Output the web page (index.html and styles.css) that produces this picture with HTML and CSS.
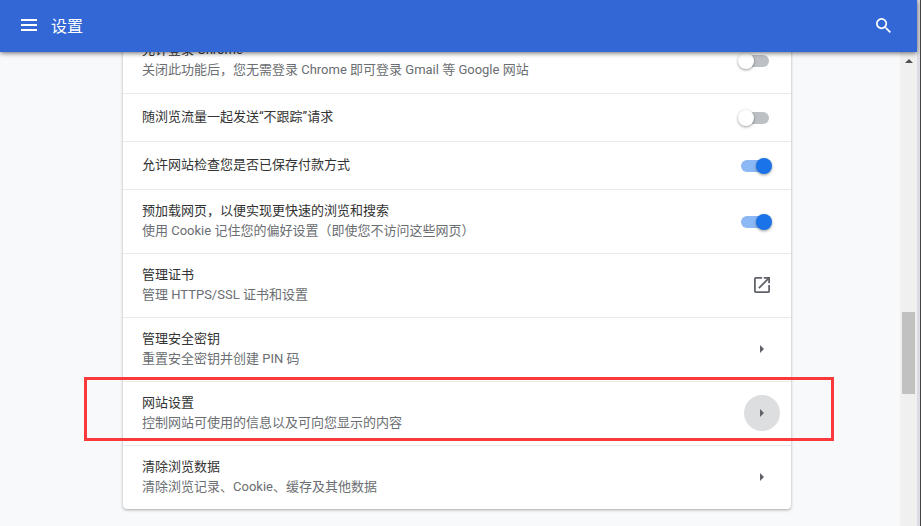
FILE: index.html
```
<!DOCTYPE html>
<html lang="zh-CN">
<head>
    <meta charset="UTF-8">
    <meta name="viewport" content="width=device-width, initial-scale=1.0">
    <title>设置</title>
    <link rel="stylesheet" href="styles.css">
</head>
<body>
    <div class="window">
        <header class="toolbar">
            <button class="toolbar-btn" aria-label="主菜单">
                <svg width="16" height="12" viewBox="0 0 16 12"><path d="M0 0h16v2H0zM0 5h16v2H0zM0 10h16v2H0z" fill="currentColor"/></svg>
            </button>
            <h1>设置</h1>
            <button class="toolbar-btn search-btn" aria-label="搜索设置">
                <svg width="15" height="15" viewBox="3 3 17.5 17.5"><path d="M15.5 14h-.79l-.28-.27A6.47 6.47 0 0 0 16 9.500 6.500 6.500 0 1 0 9.500 16c1.610 0 3.090-.59 4.230-1.570l.27.28v.79l5 4.990L20.490 19l-4.990-5zm-6 0C7.010 14 5 11.990 5 9.500S7.010 5 9.500 5 14 7.010 14 9.500 11.990 14 9.500 14z" fill="currentColor"/></svg>
            </button>
        </header>

        <div class="view">
            <main class="content">
                <div class="card">
                    <div class="row">
                        <label class="text" for="signin">
                            <span class="title">允许登录 Chrome</span>
                            <span class="sub">关闭此功能后，您无需登录 Chrome 即可登录 Gmail 等 Google 网站</span>
                        </label>
                        <input type="checkbox" class="toggle" id="signin">
                    </div>
                    <div class="row">
                        <label class="text" for="dnt"><span class="title">随浏览流量一起发送“不跟踪”请求</span></label>
                        <input type="checkbox" class="toggle" id="dnt">
                    </div>
                    <div class="row">
                        <label class="text" for="payment"><span class="title">允许网站检查您是否已保存付款方式</span></label>
                        <input type="checkbox" class="toggle" id="payment" checked>
                    </div>
                    <div class="row">
                        <label class="text" for="preload">
                            <span class="title">预加载网页，以便实现更快速的浏览和搜索</span>
                            <span class="sub">使用 Cookie 记住您的偏好设置（即使您不访问这些网页）</span>
                        </label>
                        <input type="checkbox" class="toggle" id="preload" checked>
                    </div>
                    <div class="row">
                        <div class="text">
                            <span class="title">管理证书</span>
                            <span class="sub">管理 HTTPS/SSL 证书和设置</span>
                        </div>
                        <button class="icon-btn" aria-label="管理证书">
                            <svg width="16" height="16" viewBox="3 3 18 18"><path d="M19 19H5V5h7V3H5a2 2 0 0 0-2 2v14a2 2 0 0 0 2 2h14c1.100 0 2-.9 2-2v-7h-2v7zM14 3v2h3.590l-9.830 9.830 1.410 1.410L19 6.410V10h2V3h-7z" fill="currentColor"/></svg>
                        </button>
                    </div>
                    <div class="row">
                        <div class="text">
                            <span class="title">管理安全密钥</span>
                            <span class="sub">重置安全密钥并创建 PIN 码</span>
                        </div>
                        <button class="icon-btn" aria-label="管理安全密钥">
                            <svg width="4" height="8" viewBox="0 0 4 8"><path d="M0 0l4 4-4 4z" fill="currentColor"/></svg>
                        </button>
                    </div>
                    <div class="row marked">
                        <div class="text">
                            <span class="title">网站设置</span>
                            <span class="sub">控制网站可使用的信息以及可向您显示的内容</span>
                        </div>
                        <button class="icon-btn active" aria-label="网站设置">
                            <svg width="4" height="8" viewBox="0 0 4 8"><path d="M0 0l4 4-4 4z" fill="currentColor"/></svg>
                        </button>
                    </div>
                    <div class="row">
                        <div class="text">
                            <span class="title">清除浏览数据</span>
                            <span class="sub">清除浏览记录、Cookie、缓存及其他数据</span>
                        </div>
                        <button class="icon-btn" aria-label="清除浏览数据">
                            <svg width="4" height="8" viewBox="0 0 4 8"><path d="M0 0l4 4-4 4z" fill="currentColor"/></svg>
                        </button>
                    </div>
                </div>
            </main>

            <div class="scrollbar" aria-hidden="true">
                <div class="scroll-up"><svg width="8" height="4" viewBox="0 0 8 4"><path d="M0 4l4-4 4 4z" fill="currentColor"/></svg></div>
                <div class="track-above"></div>
                <div class="thumb"></div>
                <div class="track-below"></div>
            </div>
        </div>
    </div>
</body>
</html>
```
FILE: styles.css
```
* { box-sizing: border-box; }
body { margin: 0; font-family: Roboto, "Noto Sans CJK SC", sans-serif; font-size: 13px; line-height: 20px; color: #333; }
button { border: none; background: none; padding: 0; cursor: pointer; }
svg { display: block; }

.window { height: 100vh; display: flex; flex-direction: column; overflow: hidden; background: #dcdde4; border-right: 1px solid #444; padding-right: 3px; }

/* top bar */
.toolbar { position: relative; z-index: 1; flex: none; height: 52px; display: flex; align-items: center; padding: 0 19px 2px 14px; background: #3367d6; color: #fff; box-shadow: 0 1px 5px rgba(0,0,0,0.6); }
.toolbar h1 { margin: 0 0 0 7px; font-size: 16px; line-height: 24px; font-weight: 400; padding-top: 3px; }
.toolbar-btn { width: 30px; height: 30px; display: flex; align-items: center; justify-content: center; color: #fff; }
.search-btn { margin-left: auto; }

.view { flex: 1; min-height: 0; display: flex; background: #f8f9fb; }
.content { flex: 1; min-width: 0; overflow: hidden; padding: 0 109px 0 123px; }

/* card is scrolled partly under the top bar */
.card { margin-top: -23px; background: #fff; border-radius: 4px; box-shadow: 0 1px 3px rgba(60,64,67,0.45); }
.row { position: relative; display: flex; align-items: center; min-height: 48px; padding: 0 11px 0 19px; border-top: 1px solid #e9e9e9; }
.row:first-child { border-top: none; }
.text { flex: 1; min-width: 0; padding-bottom: 2px; }
.title, .sub { display: block; }
.row:has(.sub) { min-height: 64px; }
.sub { color: #6b6e72; }

.toggle { appearance: none; flex: none; display: flex; align-items: center; width: 28px; height: 12px; margin: 0 11px 0 0; border-radius: 6px; background: #bdc1c6; cursor: pointer; }
.toggle::before { content: ""; flex: none; width: 16px; height: 16px; margin-left: -3px; border-radius: 50%; background: #fff; box-shadow: 0 1px 3px rgba(0,0,0,0.4); }
.toggle:checked { background: #8cb8f6; }
.toggle:checked::before { margin-left: 15px; background: #1a73e8; }

.icon-btn { flex: none; width: 36px; height: 36px; margin-bottom: 2px; border-radius: 50%; display: flex; align-items: center; justify-content: center; color: #5f6368; }
.icon-btn.active { background: #dddee0; }

/* red frame around the site settings row */
.marked::after { content: ""; position: absolute; top: -5px; right: -43px; bottom: 4px; left: -39px; border: 3px solid #fa3a3a; pointer-events: none; }

.scrollbar { flex: none; width: 17px; display: flex; flex-direction: column; align-items: center; background: #f0f0f0; }
.scroll-up { height: 18px; display: flex; align-items: center; color: #505050; }
.track-above { flex: 242; }
.thumb { width: 13px; height: 82px; background: #c1c1c1; }
.track-below { flex: 132; }
```
